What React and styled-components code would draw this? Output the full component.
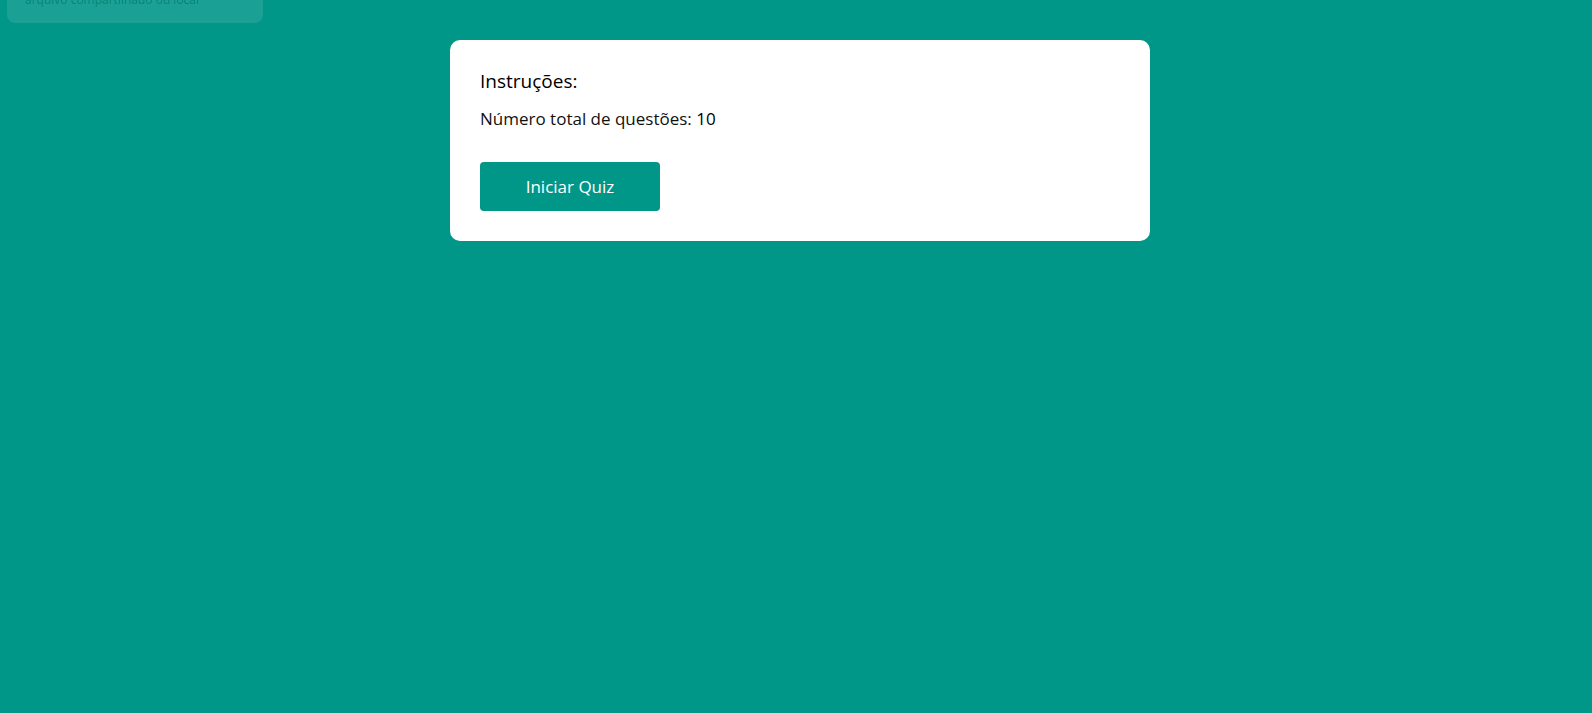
import React from "react";
import styled, { createGlobalStyle } from "styled-components";

const GlobalStyle = createGlobalStyle`
    * {
        box-sizing: border-box;
    }
    body {
        margin: 0;
        background-color: #009688;
        font-family: "Open Sans", "Noto Sans", sans-serif;
    }
`;

export default function App() {
    const totalQuestions = 10;

    return (
        <>
            <GlobalStyle />
            <Toast>
                <span>Carregue as perguntas a partir de um</span>
                <span>arquivo compartilhado ou local</span>
            </Toast>
            <Page>
                <Card>
                    <Title>Instruções:</Title>
                    <Info>
                        Número total de questões: <strong>{totalQuestions}</strong>
                    </Info>
                    <StartButton type="button">Iniciar Quiz</StartButton>
                </Card>
            </Page>
        </>
    );
}

// ::::::::::Styled-Components::::::::::
const Page = styled.div`
    width: 100%;
    min-height: 100vh;
    padding: 40px 0 0 8px;

    display: flex;
    flex-direction: column;
    align-items: center;
`
const Card = styled.div`
    width: 700px;
    background-color: #FFFFFF;
    border-radius: 10px;
    padding: 30px;

    display: flex;
    flex-direction: column;
    align-items: flex-start;
`
const Title = styled.h2`
    margin: 0 0 17px 0;
    font-size: 19px;
    line-height: 22px;
    font-weight: 500;
    color: #000000;
`
const Info = styled.p`
    margin: 0 0 33px 0;
    font-size: 17px;
    line-height: 20px;
    color: #111111;

    strong {
        font-weight: 500;
        color: #000000;
    }
`
const StartButton = styled.button`
    width: 180px;
    height: 49px;
    border: none;
    border-radius: 4px;
    background-color: #009688;
    color: #FFFFFF;
    font-family: inherit;
    font-size: 17px;
    cursor: pointer;
`
const Toast = styled.div`
    position: fixed;
    top: -32px;
    left: 7px;
    width: 256px;
    height: 55px;
    padding: 8px 18px;
    border-radius: 8px;
    background-color: rgba(255, 255, 255, 0.1);
    color: #0b8478;
    font-size: 12px;
    line-height: 16px;

    display: flex;
    flex-direction: column;
    span {
        white-space: nowrap;
    }
`
